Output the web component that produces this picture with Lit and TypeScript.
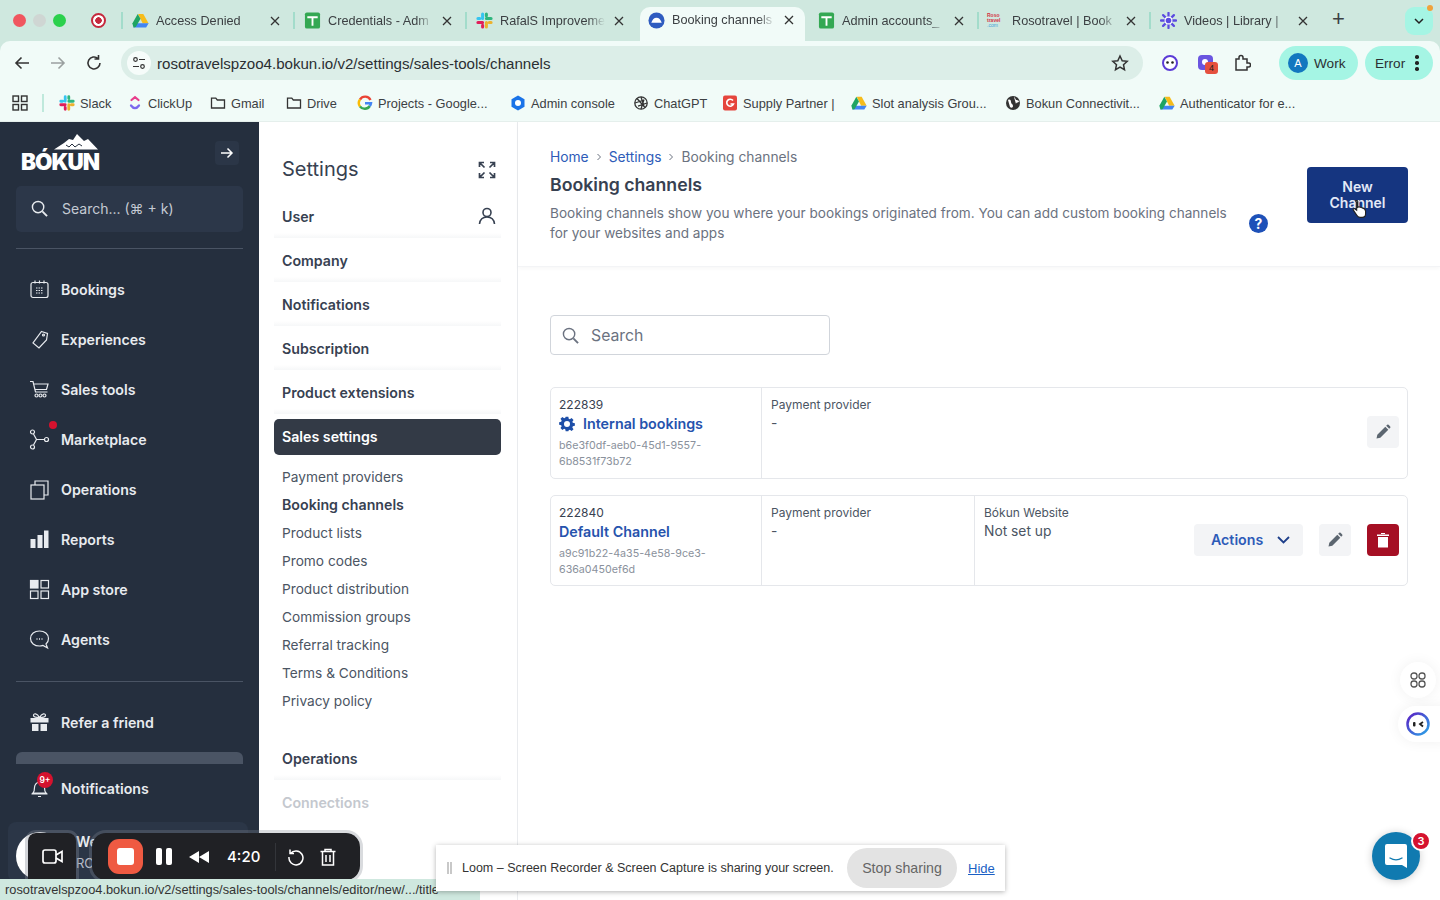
import { LitElement, html, css, svg } from "lit";
import { customElement } from "lit/decorators.js";

const drive = html`<svg class="fav" viewBox="0 0 18 16"><path d="M12 1l5.600 10.200h-6.200L6.400 1H12z" fill="#f6bc1b"/><path d="M4 11h13.600L15 15.400H1.600L4 11z" fill="#4285f4"/><path d="M1.600 15.400L.4 11.200 6 1l3 5.200-5 8.800z" fill="#1fa463"/></svg>`;
const sheet = html`<svg class="fav" viewBox="0 0 18 18"><rect x="1" y="0.500" width="16" height="17" rx="2" fill="#34a853"/><path d="M3.500 5.500h11M9 5.500v9" stroke="#fff" stroke-width="2"/></svg>`;
const slack = html`<svg class="fav" viewBox="0 0 18 18"><g stroke-width="3.200" stroke-linecap="round"><path d="M2 11h5M7 16v-2" stroke="#e01e5a"/><path d="M7 2v5M2 7h2" stroke="#36c5f0"/><path d="M16 7h-5M11 2v2" stroke="#2eb67d"/><path d="M11 16v-5M16 11h-2" stroke="#ecb22e"/></g></svg>`;
const active = html`<svg class="fav" viewBox="0 0 18 18"><circle cx="9" cy="9" r="8.500" fill="#2f5cc0"/><path d="M3.500 11.500h11C13.500 8 11.500 6 9 6s-4.500 2-5.500 5.500z" fill="#fff"/></svg>`;
const roso = html`<span class="roso"><b>Roso</b><b>travel</b><i>.com</i></span>`;
const loomStar = html`<svg class="fav" viewBox="0 0 18 18"><g stroke="#5b4be0" stroke-width="2.400" stroke-linecap="round"><path d="M9 1v16M1 9h16M3.300 3.300l11.400 11.400M14.700 3.300L3.300 14.700"/></g><circle cx="9" cy="9" r="3.600" fill="#5b4be0" stroke="#fff" stroke-width="1.200"/></svg>`;

const tabs = [
  { t: "Access Denied", i: drive },
  { t: "Credentials - Adm", i: sheet },
  { t: "RafalS Improveme", i: slack },
  { t: "Booking channels", i: active, on: true },
  { t: "Admin accounts_", i: sheet },
  { t: "Rosotravel | Book", i: roso },
  { t: "Videos | Library |", i: loomStar },
];

const folder = html`<svg class="bm-i" viewBox="0 0 16 16" fill="none" stroke="#333" stroke-width="1.300"><path d="M1.500 3.200h4.300l1.500 1.800h7.200v8H1.500z"/></svg>`;
const bookmarks = [
  { t: "Slack", w: 68, i: html`<span class="bm-wrap">${slack}</span>` },
  { t: "ClickUp", w: 83, i: html`<svg class="bm-i" viewBox="0 0 16 16" fill="none" stroke-width="2.200" stroke-linecap="round"><path d="M4.500 5L8 2.200 11.500 5" stroke="#e83e8c"/><path d="M4 10.500c2.500 3.500 5.500 3.500 8 0" stroke="#7b68ee"/></svg>` },
  { t: "Gmail", w: 76, i: folder },
  { t: "Drive", w: 71, i: folder },
  { t: "Projects - Google...", w: 153, i: html`<svg class="bm-i" viewBox="0 0 16 16" fill="none" stroke-width="2.400"><path d="M13.500 5A6 6 0 0 0 3 4.500" stroke="#ea4335"/><path d="M3 4.500a6 6 0 0 0 0 7" stroke="#fbbc05"/><path d="M3 11.500a6 6 0 0 0 9.800-.5" stroke="#34a853"/><path d="M8 8.200h6a6 6 0 0 1-1.200 2.800" stroke="#4285f4"/></svg>` },
  { t: "Admin console", w: 123, i: html`<svg class="bm-i" viewBox="0 0 16 16"><path d="M8 .5l6.500 3.700v7.600L8 15.500l-6.500-3.700V4.200z" fill="#1a73e8"/><circle cx="8" cy="8" r="3" fill="#fff"/></svg>` },
  { t: "ChatGPT", w: 89, i: html`<svg class="bm-i" viewBox="0 0 16 16" fill="none" stroke="#333" stroke-width="1.300"><circle cx="8" cy="8" r="6.200"/><path d="M8 2l3 9.500M14 8l-9 3.200M4 3.500l8 9M8 14l3-9.500M2 8l9-3"/></svg>` },
  { t: "Supply Partner |", w: 129, i: html`<svg class="bm-i" viewBox="0 0 16 16"><rect x="1" y=".5" width="14" height="15" rx="2" fill="#e5453c"/><path d="M11 5.500A3.500 3.500 0 1 0 11.500 9H8.500" fill="none" stroke="#fff" stroke-width="1.600"/></svg>` },
  { t: "Slot analysis Grou...", w: 154, i: html`<span class="bm-wrap">${drive}</span>` },
  { t: "Bokun Connectivit...", w: 154, i: html`<svg class="bm-i" viewBox="0 0 16 16"><circle cx="8" cy="8" r="7" fill="#333"/><path d="M3 5c2-1 3 0 3 2s2 2 2 4-2 2-3 1zM9 2c2 1 1 3 3 3l2 1c0 2-3 1-3 3" fill="#fff"/></svg>` },
  { t: "Authenticator for e...", w: 140, i: html`<span class="bm-wrap">${drive}</span>` },
];

const navIc = {
  cal: svg`<rect x="2" y="3.500" width="17" height="15" rx="2"/><path d="M6 1.500v3M10.500 1.500v3M15 1.500v3M7 9h7M7 11.500h7M7 14h7" stroke-dasharray="1.500 1"/>`,
  tag: svg`<path d="M12.500 2.500l6 2-1 6.500-7.500 8-6-5z"/><circle cx="14.500" cy="6" r="1"/>`,
  cart: svg`<path d="M1 2.500h3l2.500 10.500h12M5 5h14l-1.500 5.500H6.500"/><circle cx="7.500" cy="16.500" r="1.500"/><circle cx="11.500" cy="16.500" r="1.500"/><circle cx="15.500" cy="16.500" r="1.500"/>`,
  market: svg`<circle cx="3.500" cy="3" r="2"/><circle cx="3.500" cy="18" r="2"/><circle cx="17.500" cy="10.500" r="2"/><path d="M4.500 5l3 5.500-3 5.500M7.500 10.500h8"/>`,
  ops: svg`<rect x="2" y="6" width="13" height="14"/><path d="M6 6V2h13v14h-4"/>`,
  reports: svg`<rect x="1.500" y="10" width="5" height="9" fill="currentColor" stroke="none"/><rect x="8.500" y="6" width="5" height="13" fill="currentColor" stroke="none"/><rect x="15" y="1.500" width="4.500" height="17.500" fill="currentColor" stroke="none"/>`,
  store: svg`<rect x="1.500" y="1.500" width="7.500" height="7.500" fill="currentColor"/><rect x="12" y="1.500" width="7.500" height="7.500"/><rect x="1.500" y="12" width="7.500" height="7.500"/><rect x="12" y="12" width="7.500" height="7.500"/>`,
  agents: svg`<path d="M10.500 2c-5 0-9 3-9 7.500s4 7.500 9 7.500c1.500 0 2.500-.3 3.500-.6l4.500 2.600-1.500-4c1.700-1.300 2.500-3.200 2.500-5.500C19.500 5 15.500 2 10.500 2z"/><path d="M7.500 10h1M10 10h1M12.500 10h1" stroke-width="1.600"/>`,
  gift: svg`<path d="M1.500 6h18v4.500h-18zM3 12h6.500v7H3zM11.500 12H18v7h-6.500z" fill="currentColor" stroke="none"/><path d="M10.500 5.500C8 1 4.500 1 4.500 3.500c0 2 3 2 6 2zM10.500 5.500c2.500-4.500 6-4.500 6-2 0 2-3 2-6 2z"/>`,
  bell: svg`<path d="M4 15c1.500-1.500 1.500-3 1.500-5.500S7.500 4 10.500 4s5 2.500 5 5.500 0 4 1.500 5.500zM2.500 16h16M9 18.500h3"/>`,
};

const nav = [
  ["Bookings", navIc.cal], ["Experiences", navIc.tag], ["Sales tools", navIc.cart], ["Marketplace", navIc.market],
  ["Operations", navIc.ops], ["Reports", navIc.reports], ["App store", navIc.store], ["Agents", navIc.agents],
];

const pencil = html`<svg class="pen" viewBox="0 0 16 16"><path d="M1.500 14.500l.8-3.800 8-8 3 3-8 8zM11.200 1.800l1-1a1 1 0 0 1 1.400 0l1.600 1.600a1 1 0 0 1 0 1.400l-1 1z" fill="#5c6670"/></svg>`;
const gear = html`<svg class="gear" viewBox="0 0 24 24"><path fill="#1e4fa8" fill-rule="evenodd" d="M10 1h4l.6 3.100 1.700.7 2.600-1.800 2.900 2.900-1.800 2.600.7 1.700 3.100.6v4l-3.100.6-.7 1.700 1.800 2.600-2.900 2.900-2.600-1.800-1.700.7L14 23h-4l-.6-3.100-1.700-.7-2.600 1.800-2.900-2.900L4 15.500l-.7-1.700L.2 13.200V9.200l3.100-.6.700-1.700L2.200 4.300 5.100 1.400 7.700 3.200l1.700-.7zM12 7.500a4.500 4.500 0 1 0 0 9 4.500 4.500 0 0 0 0-9z"/></svg>`;

@customElement("app-root")
export class AppRoot extends LitElement {
  static styles = css`
    :host { display: block; width: 1440px; height: 900px; position: relative; overflow: hidden; background: #fff; font-family: Inter, "Liberation Sans", sans-serif; color: #374151; }
    * { box-sizing: border-box; }
    .chrome { height: 122px; background: #cfe8df; font-family: "Liberation Sans", Arial, sans-serif; color: #3c4043; }
    .tabbar { height: 41px; display: flex; align-items: flex-start; padding-left: 10px; }
    .lights { display: flex; gap: 7px; width: 78px; padding: 14px 0 0 3px; }
    .lights i { width: 13px; height: 13px; border-radius: 50%; }
    .rec { width: 15px; height: 15px; border-radius: 50%; border: 2px solid #c5283d; background: radial-gradient(#c5283d 0 3px, #fff 3.500px); margin: 13px 0 0 3px; flex: none; }
    .tabs { display: flex; margin-left: 15px; height: 41px; }
    .tab { width: 172px; height: 41px; display: flex; align-items: center; padding: 0 12px 0 8px; position: relative; flex: none; }
    .tab::before { content: ""; position: absolute; left: 0; top: 12px; height: 17px; width: 1.500px; background: #a3dccb; }
    .tab.on { width: 165px; margin-left: 3px; background: #f1fbf8; border-radius: 10px 10px 0 0; padding: 0 10px 8px 5px; margin-top: 7px; height: 34px; }
    .tab.on::before, .tab.on + .tab::before { display: none; }
    .tab.on + .tab { padding-left: 10px; }
    .tab .lab { flex: 1; margin-left: 7px; white-space: nowrap; overflow: hidden; -webkit-mask-image: linear-gradient(90deg,#000 84%,transparent 100%); mask-image: linear-gradient(90deg,#000 84%,transparent 100%); font-size: 12.700px; line-height: 16px; }
    .tab .x { width: 12px; height: 12px; margin-left: 8px; flex: none; }
    .tab .icon-box { width: 18px; height: 18px; flex: none; display: flex; align-items: center; justify-content: center; margin-left: 2px; }
    .fav { width: 17px; height: 17px; display: block; }
    .roso { width: 18px; font-size: 5px; line-height: 5px; display: flex; flex-direction: column; font-family: "Liberation Sans"; color: #d3323f; }
    .roso b { font-weight: 700; } .roso i { color: #43a3d8; font-style: normal; }
    .plus { font-size: 22px; line-height: 38px; margin-left: 11px; color: #3c4043; font-weight: 400; }
    .more { margin-left: auto; margin-right: 7px; margin-top: 7px; width: 28px; height: 28px; background: #a5f5e4; border-radius: 9px; display: flex; align-items: center; justify-content: center; position: relative; }
    .more::after { content: ""; position: absolute; top: -2px; right: 0; width: 6px; height: 6px; border-radius: 50%; background: #f0a23c; }
    .toolbar { height: 45px; display: flex; align-items: center; padding: 0 6px 1px 13px; background: #f1fbf8; border-radius: 10px 10px 0 0; }
    .tb-ic { width: 18px; height: 18px; flex: none; }
    .addr { margin-left: 18px; width: 1022px; height: 34px; border-radius: 17px; background: #dceee8; display: flex; align-items: center; padding: 0 14px 0 6px; font-size: 15.100px; color: #2b2f33; }
    .tune { width: 24px; height: 24px; border-radius: 50%; background: #f6fcfa; display: flex; align-items: center; justify-content: center; margin-right: 6px; }
    .addr .star { margin-left: auto; }
    .exts { display: flex; align-items: center; margin-left: 18px; gap: 18px; }
    .pill { height: 34px; border-radius: 17px; background: #a5f5e4; display: flex; align-items: center; font-size: 13.600px; color: #2b2f33; }
    .work { width: 79px; padding-left: 9px; gap: 6px; margin-left: 28px; }
    .work span { width: 20px; height: 20px; border-radius: 50%; background: #1277bf; color: #fff; font-size: 11px; display: flex; align-items: center; justify-content: center; }
    .err { width: 68px; margin-left: 7px; padding-left: 10px; gap: 10px; }
    .dots { display: flex; flex-direction: column; gap: 2.500px; } .dots i { width: 3.500px; height: 3.500px; border-radius: 50%; background: #222; }
    .ext-badge { position: relative; width: 18px; height: 18px; }
    .ext-badge b { position: absolute; left: 8px; top: 8px; width: 13px; height: 12px; border-radius: 3px; background: #e5503e; color: #222; font-size: 9px; font-weight: 400; text-align: center; line-height: 12px; }
    .bookmarks { height: 36px; display: flex; align-items: center; padding: 0 0 2px 12px; font-size: 12.800px; color: #3c4043; background: #f1fbf8; box-shadow: inset 0 -1px 0 #e5efec; }
    .bm-grid { width: 16px; height: 16px; }
    .bm-sep { width: 1.500px; height: 18px; background: #bfe9dc; margin: 0 15px 0 14px; }
    .bm { display: flex; align-items: center; gap: 5.500px; white-space: nowrap; flex: none; }
    .bm-i { width: 16px; height: 16px; flex: none; }
    .bm-wrap { display: inline-flex; } .bm-wrap .fav { width: 16px; height: 16px; }

    .main { display: flex; height: 778px; overflow: hidden; }
    .side { width: 259px; flex: none; background: #252f3e; padding: 0 16px; color: #eef0f3; }
    .logo-row { height: 64px; display: flex; justify-content: space-between; padding: 10px 0 0 5px; }
    .logo { position: relative; width: 80px; padding-top: 18px; font-size: 22.500px; line-height: 24px; font-weight: 900; color: #fff; letter-spacing: -1px; white-space: nowrap; }
    .logo svg { position: absolute; left: 33px; top: 2px; width: 45px; height: 16px; }
    .collapse { width: 24px; height: 24px; margin: 9px 4px 0 0; border-radius: 4px; background: #2b3647; display: flex; align-items: center; justify-content: center; }
    .s-search { height: 46px; border-radius: 5px; background: #2c3749; display: flex; align-items: center; padding: 0 0 1px 15px; gap: 14px; color: #c4cad3; font-size: 14px; }
    .s-div { height: 1px; background: #4a5464; margin-top: 16px; }
    .navlist { margin-top: 15px; display: flex; flex-direction: column; }
    .nav { height: 50px; display: flex; align-items: center; gap: 11px; padding-left: 13px; font-size: 14.200px; font-weight: 600; color: #e8ebef; position: relative; }
    .nav svg { width: 21px; height: 21px; fill: none; stroke: currentColor; stroke-width: 1.200; flex: none; }
    .dot { position: absolute; left: 33px; top: 7px; width: 8px; height: 8px; border-radius: 50%; background: #d5122e; }
    .nav-div { margin-top: 17px; }
    .refer { margin-top: 15px; }
    .bar { height: 12px; border-radius: 6px 6px 0 0; background: #4a5464; margin-top: 5px; }
    .notif { margin-top: -1px; }
    .badge9 { position: absolute; left: 21px; top: 9px; width: 16px; height: 16px; border-radius: 50%; background: #d5122e; color: #fff; font-size: 8.500px; font-weight: 600; text-align: center; line-height: 16px; }

    .settings { width: 259px; flex: none; border-right: 1px solid #e9ebee; padding: 0 16px 0 15px; }
    .set-head { height: 72px; padding: 32px 4px 0 8px; display: flex; justify-content: space-between; align-items: flex-start; font-size: 20px; line-height: 30px; color: #374151; }
    .set-head svg { width: 18px; height: 18px; margin: 7px 1px 0 0; }
    .group { height: 44px; padding: 0 4px 0 8px; display: flex; align-items: center; justify-content: space-between; font-size: 14.200px; font-weight: 600; color: #374151; position: relative; }
    .group::after { content: ""; position: absolute; left: 0; right: 0; bottom: 0; height: 5px; background: linear-gradient(#fff, #f6f7f8); }
    .group svg { width: 18px; height: 18px; margin-right: 1px; }
    .group.act { height: 36px; margin-top: 5px; padding-bottom: 1px; background: #333a46; color: #fff; border-radius: 5px; }
    .group.act::after { display: none; }
    .sub { margin-top: 8px; display: flex; flex-direction: column; padding-left: 8px; font-size: 13.700px; color: #4b5563; }
    .sub div { height: 28px; line-height: 28px; }
    .sub .b { font-weight: 600; color: #374151; font-size: 14.200px; }
    .group.ops { margin-top: 21px; }
    .group.fade { color: #c4c8ce; }
    .group.fade::after { display: none; }

    .content { flex: 1; min-width: 0; }
    .c-head { height: 145px; padding: 25px 32px 0 32px; display: flex; box-shadow: 0 2px 4px rgba(0,0,0,.03); border-bottom: 1px solid #f3f4f6; }
    .c-txt { flex: 1; }
    .crumbs { display: flex; gap: 6px; align-items: center; font-size: 13.800px; line-height: 20px; color: #6b7280; }
    .crumbs a { color: #2d5bb8; } .crumbs svg { width: 8px; height: 8px; }
    h1 { font-size: 17.700px; font-weight: 600; margin: 8px 0 0; line-height: 20px; color: #374151; }
    .c-txt p { margin: 8px 0 0; width: 680px; font-size: 13.600px; line-height: 20px; color: #6b7280; }
    .help { margin: 67px 0 0 19px; width: 19px; height: 19px; border-radius: 50%; background: #1e51b8; color: #fff; font-size: 14px; font-weight: 700; text-align: center; line-height: 19px; flex: none; }
    .newbtn { margin: 20px 0 0 39px; width: 101px; height: 56px; border-radius: 4px; background: #153580; color: #e3e9f7; border: 0; font: 600 14px/16px Inter, sans-serif; padding: 0 18px; text-align: center; flex: none; position: relative; }
    .cursor { position: absolute; left: 44px; top: 32px; width: 18px; height: 20px; }
    .search { margin: 48px 0 0 32px; width: 280px; height: 40px; border: 1px solid #d1d5db; border-radius: 4px; display: flex; align-items: center; padding-left: 11px; gap: 12px; font-size: 15.800px; color: #6b7280; }
    .cards { margin: 32px 32px 0; display: flex; flex-direction: column; gap: 16px; }
    .card { border: 1px solid #e5e7eb; border-radius: 5px; display: flex; height: 92px; position: relative; }
    .card.b { height: 91px; }
    .col { width: 213px; flex: none; padding: 9px 8px 9px 9px; border-right: 1px solid #e5e7eb; font-size: 12px; line-height: 16px; color: #4b5563; }
    .col.first { width: 211px; padding-left: 8px; }
    .col.last { border-right: 0; }
    .id { color: #374151; font-size: 12px; }
    .name { display: flex; align-items: center; gap: 8px; font-size: 14.300px; font-weight: 600; color: #2653ad; line-height: 22px; }
    .gear { width: 16px; height: 16px; }
    .uuid { margin-top: 3px; font-size: 10.700px; line-height: 16px; color: #8a919c; width: 180px; }
    .val { font-size: 13.800px; line-height: 22px; color: #4b5563; margin-top: -1px; }
    .acts { margin-left: auto; display: flex; align-items: center; gap: 16px; padding: 0 8px 2px 0; }
    .sq { width: 32px; height: 32px; border-radius: 4px; background: #f3f4f6; display: flex; align-items: center; justify-content: center; }
    .pen { width: 16px; height: 16px; }
    .sq.del { background: #a50f24; }
    .actions { width: 109px; height: 32px; border-radius: 4px; background: #f3f4f6; color: #2d5bb8; font-size: 14.200px; font-weight: 600; display: flex; align-items: center; gap: 14px; padding-left: 17px; }

    .float-a, .float-b { position: absolute; background: #fff; box-shadow: 0 0 14px rgba(0,0,0,.06); display: flex; align-items: center; justify-content: center; }
    .float-a { left: 1400px; top: 662px; width: 36px; height: 36px; border-radius: 50%; }
    .float-b { left: 1398px; top: 706px; width: 50px; height: 36px; border-radius: 18px 0 0 18px; justify-content: flex-start; padding-left: 8px; }
    .chat { position: absolute; left: 1372px; top: 832px; width: 48px; height: 48px; border-radius: 50%; background: #107ab0; box-shadow: 0 1px 8px rgba(0,0,0,.2); display: flex; align-items: center; justify-content: center; }
    .chat b { position: absolute; left: 39px; top: -1px; width: 20px; height: 20px; border-radius: 50%; border: 2px solid #fff; background: #d5122e; color: #fff; font-size: 11px; line-height: 16px; text-align: center; font-weight: 600; }
    .user { position: absolute; left: 8px; top: 822px; width: 240px; height: 60px; background: #2b3647; border-radius: 8px; color: #e8ebef; font-size: 14px; font-weight: 600; padding: 10px 0 0 68px; line-height: 20px; }
    .user i { position: absolute; left: 8px; top: 10px; width: 48px; height: 48px; border-radius: 50%; background: #fff; }
    .user small { font-weight: 400; font-size: 13px; color: #b7bdc7; display: block; margin-top: 1px; }
    .loom1, .loom2 { position: absolute; top: 833px; height: 47px; background: #202125; display: flex; align-items: center; color: #fff; padding-bottom: 0; }
    .loom1 { left: 28px; width: 48px; border-radius: 8px 8px 0 0; justify-content: center; outline: 3px solid rgba(130,135,145,.35); }
    .loom2 { left: 92px; width: 268px; border-radius: 14px; padding-left: 16px; outline: 3px solid rgba(130,135,145,.3); }
    .stop { width: 35px; height: 35px; border-radius: 11px; background: #ef5a42; display: flex; align-items: center; justify-content: center; flex: none; }
    .stop i { width: 17px; height: 17px; border-radius: 3px; background: #fff; }
    .pause { display: flex; gap: 4px; margin-left: 13px; } .pause i { width: 6px; height: 17px; border-radius: 2px; background: #fff; }
    .rew { width: 22px; height: 14px; margin-left: 17px; }
    .time { margin-left: 16px; font: 500 15px Inter, sans-serif; width: 33px; }
    .ldiv { width: 1px; height: 28px; background: #33353a; margin-left: 15px; }
    .lbtn { width: 18px; height: 18px; margin-left: 11px; flex: none; } .lbtn.t { margin-left: 14px; }
    .status { position: absolute; left: 0; top: 879px; width: 480px; height: 21px; background: #cfe8df; color: #333; font: 12.800px/21px "Liberation Sans", Arial, sans-serif; padding-left: 5px; white-space: nowrap; border-radius: 0 5px 0 0; }
    .share { position: absolute; left: 436px; top: 845px; width: 569px; height: 46px; background: #fff; box-shadow: 0 1px 5px rgba(0,0,0,.3); display: flex; align-items: center; padding-left: 11px; font: 12.500px "Liberation Sans", Arial, sans-serif; color: #333; }
    .grip { width: 5px; height: 12px; border: solid #c8c8c8; border-width: 0 2px; margin-right: 10px; flex: none; }
    .share-text { width: 374px; flex: none; white-space: nowrap; }
    .stopshare { margin-left: 11px; width: 110px; height: 40px; border-radius: 20px; background: #e3e3e3; color: #666; font-size: 14.200px; display: flex; align-items: center; justify-content: center; flex: none; }
    .hide { margin-left: 11px; color: #1a5fc4; text-decoration: underline; font-size: 13px; }
    .ml18 { margin-left: 18px; }
  `;

  render() {
    const x = html`<svg class="x" viewBox="0 0 12 12" stroke="#333" stroke-width="1.300"><path d="M2 2l8 8M10 2l-8 8"/></svg>`;
    const search = (c: string, s: number) => html`<svg width=${s} height=${s} viewBox="0 0 18 18" fill="none" stroke=${c} stroke-width="1.500"><circle cx="7.500" cy="7.500" r="6"/><path d="M12 12l5 5" stroke-width="2"/></svg>`;
    return html`
      <div class="chrome">
        <div class="tabbar">
          <div class="lights"><i style="background:#f0565f"></i><i style="background:#cfd6d3"></i><i style="background:#2bd14d"></i></div>
          <span class="rec"></span>
          <div class="tabs">
            ${tabs.map((t) => html`<div class="tab ${t.on ? "on" : ""}"><span class="icon-box">${t.i}</span><span class="lab">${t.t}</span>${x}</div>`)}
          </div>
          <span class="plus">+</span>
          <div class="more"><svg width="10" height="7" viewBox="0 0 10 7" fill="none" stroke="#222" stroke-width="1.500"><path d="M1 1l4 4 4-4"/></svg></div>
        </div>
        <div class="toolbar">
          <svg class="tb-ic" viewBox="0 0 18 18" fill="none" stroke="#333" stroke-width="1.600"><path d="M16 9H3M8.500 3.500L3 9l5.500 5.500"/></svg>
          <svg class="tb-ic ml18" viewBox="0 0 18 18" fill="none" stroke="#9aa0a0" stroke-width="1.600"><path d="M2 9h13M9.500 3.500L15 9l-5.500 5.500"/></svg>
          <svg class="tb-ic ml18" viewBox="0 0 18 18" fill="none" stroke="#333" stroke-width="1.600"><path d="M15 9a6 6 0 1 1-2-4.500M13.500 1v4h-4"/></svg>
          <div class="addr">
            <span class="tune"><svg width="14" height="14" viewBox="0 0 14 14" fill="none" stroke="#333" stroke-width="1.200"><circle cx="3.500" cy="3.500" r="1.800"/><path d="M7 3.500h6M1 10.500h6"/><circle cx="10.500" cy="10.500" r="1.800"/></svg></span>
            rosotravelspzoo4.bokun.io/v2/settings/sales-tools/channels
            <svg class="star tb-ic" viewBox="0 0 18 18" fill="none" stroke="#333" stroke-width="1.500"><path d="M9 2l2.200 4.700 5 .6-3.700 3.400 1 5L9 13.200 4.500 15.700l1-5L1.800 7.300l5-.6z"/></svg>
          </div>
          <div class="exts">
            <svg class="tb-ic" viewBox="0 0 18 18"><circle cx="9" cy="9" r="7" fill="#fff" stroke="#5b3bd6" stroke-width="2"/><circle cx="6.500" cy="8.500" r="1.300" fill="#222"/><circle cx="11.500" cy="8.500" r="1.300" fill="#222"/></svg>
            <span class="ext-badge"><svg class="tb-ic" viewBox="0 0 18 18"><rect x="1" y="1" width="15" height="15" rx="4" fill="#6a55e0"/><circle cx="8" cy="8" r="3" fill="#fff"/></svg><b>4</b></span>
            <svg class="tb-ic" viewBox="0 0 18 18" fill="none" stroke="#333" stroke-width="1.500"><path d="M3 5h3V3.500a2 2 0 0 1 4 0V5h4v4h1.500a1.500 1.500 0 0 1 0 4H14v3H3z"/></svg>
          </div>
          <div class="pill work"><span>A</span>Work</div>
          <div class="pill err">Error<span class="dots"><i></i><i></i><i></i></span></div>
        </div>
        <div class="bookmarks">
          <svg class="bm-grid" viewBox="0 0 16 16" fill="none" stroke="#333" stroke-width="1.400"><rect x="1" y="1" width="5.500" height="5.500"/><rect x="9.500" y="1" width="5.500" height="5.500"/><rect x="1" y="9.500" width="5.500" height="5.500"/><rect x="9.500" y="9.500" width="5.500" height="5.500"/></svg>
          <span class="bm-sep"></span>
          ${bookmarks.map((b) => html`<span class="bm" style="width:${b.w}px">${b.i}${b.t}</span>`)}
        </div>
      </div>

      <div class="main">
        <aside class="side">
          <div class="logo-row">
            <div class="logo">
              <svg viewBox="0 0 45 16"><path d="M0 15.500L10 9l5-4 4 1 4-6 7 7 4-2 10 10.500z" fill="#fff"/><path d="M12 11l3 2 3-3 3 3 4-3 3 2" stroke="#252f3e" stroke-width="1" fill="none"/></svg>
              BÓKUN
            </div>
            <div class="collapse"><svg width="14" height="12" viewBox="0 0 14 12" fill="none" stroke="#fff" stroke-width="1.500"><path d="M1 6h11M7.500 1.500L12 6l-4.500 4.500"/></svg></div>
          </div>
          <div class="s-search">${search("#e8ebef", 17)}Search... (⌘ + k)</div>
          <div class="s-div"></div>
          <div class="navlist">
            ${nav.map(([n, ic], i) => html`<div class="nav"><svg viewBox="0 0 21 21">${ic}</svg>${n}${i === 3 ? html`<span class="dot"></span>` : ""}</div>`)}
          </div>
          <div class="s-div nav-div"></div>
          <div class="nav refer"><svg viewBox="0 0 21 21">${navIc.gift}</svg>Refer a friend</div>
          <div class="bar"></div>
          <div class="nav notif"><svg viewBox="0 0 21 21">${navIc.bell}</svg>Notifications<span class="badge9">9+</span></div>
        </aside>

        <section class="settings">
          <div class="set-head">Settings
            <svg viewBox="0 0 18 18" fill="none" stroke="#374151" stroke-width="1.700"><path d="M6 1.500H1.500V6M12 1.500h4.500V6M1.500 12v4.500H6M16.500 12v4.500H12M1.500 1.500L6.500 6.500M16.500 1.500l-5 5M1.500 16.500l5-5M16.500 16.500l-5-5"/></svg>
          </div>
          <div class="group">User<svg viewBox="0 0 18 18" fill="none" stroke="#374151" stroke-width="1.600"><circle cx="9" cy="5.500" r="4"/><path d="M1.500 17c.5-4.500 3.500-7 7.500-7s7 2.500 7.500 7"/></svg></div>
          <div class="group">Company</div>
          <div class="group">Notifications</div>
          <div class="group">Subscription</div>
          <div class="group">Product extensions</div>
          <div class="group act">Sales settings</div>
          <div class="sub">
            <div>Payment providers</div><div class="b">Booking channels</div><div>Product lists</div><div>Promo codes</div><div>Product distribution</div><div>Commission groups</div><div>Referral tracking</div><div>Terms &amp; Conditions</div><div>Privacy policy</div>
          </div>
          <div class="group ops">Operations</div>
          <div class="group fade">Connections</div>
        </section>

        <section class="content">
          <div class="c-head">
            <div class="c-txt">
              <div class="crumbs"><a>Home</a><svg viewBox="0 0 8 8" fill="none" stroke="#6b7280"><path d="M2.500 1l3 3-3 3"/></svg><a>Settings</a><svg viewBox="0 0 8 8" fill="none" stroke="#6b7280"><path d="M2.500 1l3 3-3 3"/></svg><span>Booking channels</span></div>
              <h1>Booking channels</h1>
              <p>Booking channels show you where your bookings originated from. You can add custom booking channels for your websites and apps</p>
            </div>
            <div class="help">?</div>
            <button class="newbtn">New Channel
              <svg class="cursor" viewBox="0 0 16 18"><path d="M4 1.500c1-.5 2 0 2 1v5l1-.5 1 .3 1 .2 1 .5c2 .5 3 1.500 3 3v2.500c0 2-1 3-3 3H8c-1.500 0-2.500-1-3-2L2 10c-.5-1 .8-2 1.500-1L5 10V3z" fill="#fff" stroke="#222" stroke-width="1"/></svg>
            </button>
          </div>
          <div class="search">${search("#6b7280", 17)}Search</div>
          <div class="cards">
            <div class="card">
              <div class="col first"><div class="id">222839</div><div class="name">${gear}Internal bookings</div><div class="uuid">b6e3f0df-aeb0-45d1-9557-6b8531f73b72</div></div>
              <div class="col last">Payment provider<div class="val">-</div></div>
              <div class="acts"><span class="sq">${pencil}</span></div>
            </div>
            <div class="card b">
              <div class="col first"><div class="id">222840</div><div class="name">Default Channel</div><div class="uuid">a9c91b22-4a35-4e58-9ce3-636a0450ef6d</div></div>
              <div class="col">Payment provider<div class="val">-</div></div>
              <div class="col last">Bókun Website<div class="val">Not set up</div></div>
              <div class="acts">
                <span class="actions">Actions<svg width="13" height="8" viewBox="0 0 13 8" fill="none" stroke="#1e3f8a" stroke-width="1.800"><path d="M1 1l5.500 5.500L12 1"/></svg></span>
                <span class="sq">${pencil}</span>
                <span class="sq del"><svg width="14" height="16" viewBox="0 0 14 16" fill="#fff"><path d="M1 2.500h12v1.500H1zM5 1h4v1H5zM2 5h10v10.500H2z"/></svg></span>
              </div>
            </div>
          </div>
        </section>
      </div>

      <div class="float-a"><svg width="16" height="16" viewBox="0 0 16 16" fill="none" stroke="#555" stroke-width="1.300"><rect x="1" y="1" width="6" height="6" rx="2.800"/><rect x="9" y="1" width="6" height="6" rx="2.800"/><rect x="1" y="9" width="6" height="6" rx="2.800"/><rect x="9" y="9" width="6" height="6" rx="2.800"/></svg></div>
      <div class="float-b"><svg width="24" height="24" viewBox="0 0 24 24"><defs><linearGradient id="rg" x1="0" y1="0" x2="1" y2="1"><stop offset="0" stop-color="#5b1fc4"/><stop offset="1" stop-color="#2aa5e8"/></linearGradient></defs><circle cx="12" cy="12" r="10.500" fill="#fff" stroke="url(#rg)" stroke-width="2.500"/><rect x="7" y="10" width="2.500" height="4.500" rx="1" fill="#222"/><path d="M17 10l-3 2 3 2.500" fill="none" stroke="#222" stroke-width="1.800"/></svg></div>
      <div class="chat"><svg width="24" height="26" viewBox="0 0 24 26"><path d="M3 1h18a2 2 0 0 1 2 2v22l-5-3H3a2 2 0 0 1-2-2V3a2 2 0 0 1 2-2z" fill="#fff"/><path d="M6 15c4 2.500 8 2.500 12 0" fill="none" stroke="#107ab0" stroke-width="1.400" stroke-linecap="round"/></svg><b>3</b></div>

      <div class="user"><i></i>We<small>ROS</small></div>
      <div class="loom1"><svg width="21" height="15" viewBox="0 0 21 15" fill="none" stroke="#fff" stroke-width="1.700"><rect x="1" y="1" width="13" height="13" rx="2"/><path d="M14 6l6-3.500v10L14 9"/></svg></div>
      <div class="loom2">
        <span class="stop"><i></i></span>
        <span class="pause"><i></i><i></i></span>
        <svg class="rew" viewBox="0 0 22 14" fill="#fff"><path d="M0 7l10-6v12zM10 7l10-6v12z"/></svg>
        <span class="time">4:20</span>
        <span class="ldiv"></span>
        <svg class="lbtn" viewBox="0 0 18 18" fill="none" stroke="#fff" stroke-width="1.500"><path d="M3.500 5.500A7 7 0 1 1 2 9M3 1.500v4h4"/></svg>
        <svg class="lbtn t" viewBox="0 0 18 18" fill="none" stroke="#fff" stroke-width="1.500"><path d="M1.500 3.500h15M6 3.500V1.500h6v2M3.500 3.500v13.500h11V3.500M7 7v7M11 7v7"/></svg>
      </div>
      <div class="status">rosotravelspzoo4.bokun.io/v2/settings/sales-tools/channels/editor/new/.../title</div>
      <div class="share"><span class="grip"></span><span class="share-text">Loom – Screen Recorder &amp; Screen Capture is sharing your screen.</span><span class="stopshare">Stop sharing</span><span class="hide">Hide</span></div>
    `;
  }
}
